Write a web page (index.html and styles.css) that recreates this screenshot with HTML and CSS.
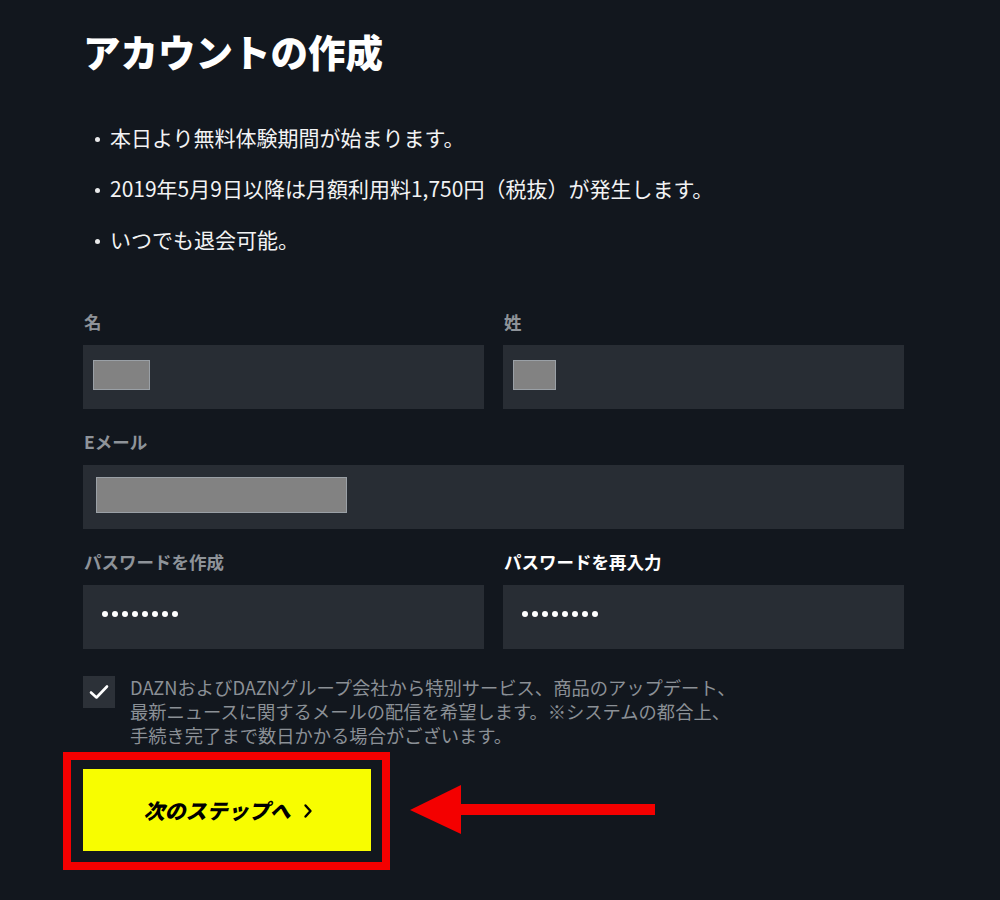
FILE: index.html
```html
<!DOCTYPE html>
<html lang="ja">
<head>
<meta charset="utf-8">
<title>アカウントの作成</title>
<link rel="stylesheet" href="styles.css">
</head>
<body>
<main class="page">
  <h1 class="title">アカウントの作成</h1>
  <ul class="notes">
    <li>本日より無料体験期間が始まります。</li>
    <li>2019年5月9日以降は月額利用料1,750円（税抜）が発生します。</li>
    <li>いつでも退会可能。</li>
  </ul>

  <form class="form">
    <div class="row two">
      <div class="field">
        <div class="label">名</div>
        <div class="input"><span class="redact redact-first"></span></div>
      </div>
      <div class="field">
        <div class="label">姓</div>
        <div class="input"><span class="redact redact-last"></span></div>
      </div>
    </div>
    <div class="row">
      <div class="field">
        <div class="label">Eメール</div>
        <div class="input input-email"><span class="redact redact-email"></span></div>
      </div>
    </div>
    <div class="row two">
      <div class="field">
        <div class="label">パスワードを作成</div>
        <div class="input input-pass"><span class="dots"><i></i><i></i><i></i><i></i><i></i><i></i><i></i><i></i></span></div>
      </div>
      <div class="field">
        <div class="label label-active">パスワードを再入力</div>
        <div class="input input-pass"><span class="dots"><i></i><i></i><i></i><i></i><i></i><i></i><i></i><i></i></span></div>
      </div>
    </div>

    <div class="consent">
      <span class="checkbox">
        <svg width="20" height="16" viewBox="0 0 20 16"><path d="M2 8.5 L7.5 13.5 L18 2.5" fill="none" stroke="#ffffff" stroke-width="2.6" stroke-linecap="round" stroke-linejoin="round"/></svg>
      </span>
      <p class="consent-text">DAZNおよびDAZNグループ会社から特別サービス、商品のアップデート、<br>最新ニュースに関するメールの配信を希望します。※システムの都合上、<br>手続き完了まで数日かかる場合がございます。</p>
    </div>

    <div class="action">
      <button type="button" class="next">次のステップへ
        <svg class="chev" width="10" height="16" viewBox="0 0 10 16"><path d="M2.5 2.5 L7.5 8 L2.5 13.5" fill="none" stroke="#000" stroke-width="2.4" stroke-linecap="round" stroke-linejoin="round"/></svg>
      </button>
      <span class="frame"></span>
      <svg class="arrow" width="246" height="52" viewBox="0 0 246 52">
        <polygon points="0,27 51,2 51,51" fill="#f40000"/>
        <rect x="50" y="21" width="195" height="11" fill="#f40000"/>
      </svg>
    </div>
  </form>
</main>
</body>
</html>
```

FILE: styles.css
```css
* { box-sizing: border-box; }

html, body {
  margin: 0;
  padding: 0;
  background: #12171e;
}

body {
  font-family: "Noto Sans CJK JP", "Noto Sans", "Liberation Sans", sans-serif;
  color: #ffffff;
  width: 1000px;
  height: 900px;
  overflow: hidden;
}

.page {
  padding: 29px 0 0 83px;
  width: 904px;
}

.title {
  margin: 0;
  font-size: 37.5px;
  line-height: 44px;
  font-weight: 900;
  letter-spacing: 0;
}

.notes {
  list-style: none;
  margin: 39px 0 0 0;
  padding: 0;
}

.notes li {
  position: relative;
  font-size: 21px;
  line-height: 51px;
  height: 51px;
  padding-left: 27px;
  color: #f2f3f4;
}

.notes li::before {
  content: "";
  position: absolute;
  left: 12px;
  top: 25px;
  width: 5px;
  height: 5px;
  border-radius: 50%;
  background: #e8e9ea;
}

.form {
  margin-top: 45px;
  display: flex;
  flex-direction: column;
}

.row {
  display: grid;
  grid-template-columns: 1fr;
  column-gap: 19px;
}

.row.two {
  grid-template-columns: 1fr 1fr;
}

.row + .row {
  margin-top: 21px;
}

.label {
  font-size: 17.5px;
  font-weight: 700;
  line-height: 24px;
  color: #8e9399;
  margin-bottom: 11px;
  padding-left: 1px;
}

.label-active {
  color: #ffffff;
}

.input {
  height: 64px;
  background: #282d34;
  display: flex;
  align-items: center;
  padding-left: 10px;
}

.redact {
  display: block;
  background: #828282;
  border: 1px solid #9aa0a6;
  height: 30px;
  margin-top: -4px;
}

.redact-first { width: 57px; }
.redact-last { width: 43px; }

.input-email { padding-left: 13px; }
.redact-email { width: 251px; height: 36px; }

.input-pass { padding-left: 19px; }

.dots {
  display: flex;
  gap: 4px;
  margin-top: -6px;
}

.dots i {
  display: block;
  width: 6px;
  height: 6px;
  border-radius: 50%;
  background: #ffffff;
}

.consent {
  display: flex;
  align-items: flex-start;
  gap: 15px;
  margin-top: 26px;
}

.checkbox {
  flex: none;
  width: 32px;
  height: 32px;
  background: #2c3138;
  display: flex;
  align-items: center;
  justify-content: center;
  margin-top: 1px;
}

.consent-text {
  margin: 0;
  font-size: 18.3px;
  line-height: 24px;
  color: #8b9096;
}

.action {
  position: relative;
  margin-top: 22px;
  height: 82px;
}

.next {
  width: 288px;
  height: 82px;
  border: none;
  background: #f8fd00;
  color: #000000;
  font-family: "Noto Sans CJK JP", "Noto Sans", sans-serif;
  font-size: 21px;
  font-weight: 900;
  font-style: italic;
  display: flex;
  align-items: center;
  justify-content: center;
  gap: 12px;
  padding: 0 0 0 2px;
  cursor: pointer;
}

.chev {
  margin-top: 1px;
}

.frame {
  position: absolute;
  left: -20px;
  top: -17px;
  width: 327px;
  height: 118px;
  border: 8px solid #f40000;
  pointer-events: none;
}

.arrow {
  position: absolute;
  left: 327px;
  top: 14px;
}
```
